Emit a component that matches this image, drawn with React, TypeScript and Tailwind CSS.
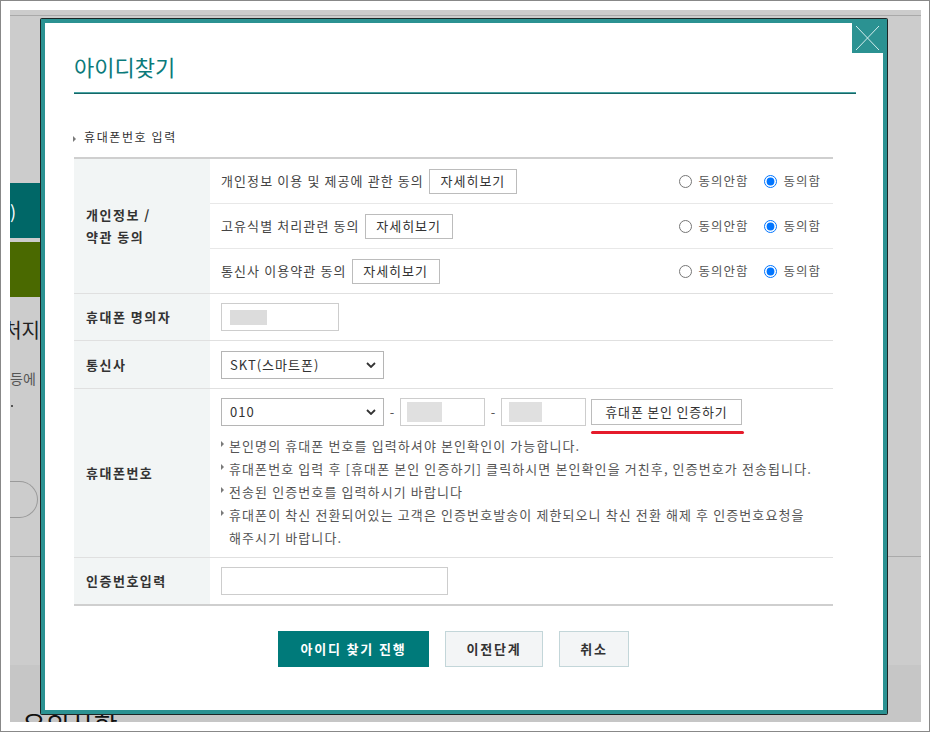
import React from "react";

function Tri() {
  return (
    <span className="inline-block h-0 w-0 shrink-0 border-y-[3px] border-l-[3px] border-y-transparent border-l-[#7a7a7a]" />
  );
}

function Chevron() {
  return (
    <svg width="10" height="6" viewBox="0 0 10 6" className="shrink-0">
      <path d="M1 1l4 4 4-4" fill="none" stroke="#333" strokeWidth="1.8" />
    </svg>
  );
}

function AgreeLine({ name, text, className }: { name: string; text: string; className: string }) {
  return (
    <div className={`flex items-center pl-[11px] pr-[12px] ${className}`}>
      <span className="whitespace-nowrap text-[13px] tracking-[1.1px] text-[#444]">{text}</span>
      <button className="ml-[5px] h-[25px] w-[88px] border border-[#bcbcbc] bg-white text-[13px] tracking-[1px] text-[#333]">
        자세히보기
      </button>
      <div className="ml-auto flex items-center whitespace-nowrap text-[12.5px] tracking-[1px] text-[#555]">
        <input type="radio" name={name} className="m-0 h-[13px] w-[13px]" />
        <span className="ml-[6px]">동의안함</span>
        <input type="radio" name={name} defaultChecked className="m-0 ml-[16px] h-[13px] w-[13px]" />
        <span className="ml-[6px]">동의함</span>
      </div>
    </div>
  );
}

function Label({ children }: { children: React.ReactNode }) {
  return (
    <div className="flex w-[136px] shrink-0 items-center bg-[#f2f5f5] pl-[12px] text-[13px] font-bold leading-[22px] tracking-[1.5px] text-[#333]">
      <div>{children}</div>
    </div>
  );
}

function Note({ children }: { children: React.ReactNode }) {
  return (
    <li className="flex items-start">
      <span className="mr-[5px] flex h-[19px] items-center">
        <Tri />
      </span>
      <span>{children}</span>
    </li>
  );
}

function Backdrop() {
  return (
    <>
      <div className="h-[6px] shrink-0 border-b border-[#a9a9a9]" />
      <div className="mt-[167px] flex w-[30px] shrink-0 flex-col">
        <div className="flex h-[55px] items-center bg-[#006767] text-[18px] leading-none text-white">)</div>
        <div className="mt-[4px] h-[55px] bg-[#4a6900]" />
        <div className="mt-[21px] flex h-[24px] justify-end overflow-hidden whitespace-nowrap text-[20px] leading-[24px] text-[#222]">
          처지
        </div>
        <div className="mt-[26px] h-[20px] overflow-hidden whitespace-nowrap text-[14px] leading-[20px] text-[#555]">
          등에
        </div>
        <div className="ml-px mt-[17px] h-[2px] w-[2px] bg-[#555]" />
        <div className="mt-[74px] h-[37px] w-[28px] rounded-r-full border border-l-0 border-[#9a9a9a]" />
      </div>
      <div className="mt-[38px] shrink-0 border-t border-[#aaa]" />
      <div className="mt-[108px] flex-1 bg-[#c6c6c6] pl-[12px] pt-[44px] text-[26px] leading-[30px] text-[#111]">
        유의사항
      </div>
    </>
  );
}

function Modal() {
  return (
    <div className="absolute left-[30px] top-[8px] h-[697px] w-[848px] rounded-[2px] bg-[#1c2626] p-px">
      <div className="relative h-full border-4 border-[#2b9292] bg-white">
        <button className="absolute right-0 top-0 h-[30px] w-[31px] bg-[#2b9292]">
          <svg width="31" height="30" viewBox="0 0 31 30">
            <path d="M4 3L27 27M27 3L4 27" stroke="#d5eeee" strokeWidth="1" />
          </svg>
        </button>

        <div className="pl-[29px] pr-[27px] pt-[28px]">
          <h1 className="h-[30px] text-[22px] leading-[30px] text-[#0b7a7a]">아이디찾기</h1>
          <div className="mt-[11px] h-[2px] border-t border-[#4aa3a3] bg-[#156767]" />

          <div className="mt-[34px] flex h-[18px] items-center text-[12px] tracking-[1.6px] text-[#333]">
            <span className="-ml-px">
              <Tri />
            </span>
            <span className="ml-[8px]">휴대폰번호 입력</span>
          </div>

          <div className="mt-[11px] w-[759px] border-t-2 border-[#cfcfcf]">
            <div className="flex border-b border-[#e0e0e0]">
              <Label>
                개인정보 /
                <br />
                약관 동의
              </Label>
              <div className="flex-1">
                <AgreeLine name="a1" text="개인정보 이용 및 제공에 관한 동의" className="h-[45px] border-b border-[#e8e8e8]" />
                <AgreeLine name="a2" text="고유식별 처리관련 동의" className="h-[45px] border-b border-[#e8e8e8]" />
                <AgreeLine name="a3" text="통신사 이용약관 동의" className="h-[44px]" />
              </div>
            </div>

            <div className="flex h-[47px] border-b border-[#e0e0e0]">
              <Label>휴대폰 명의자</Label>
              <div className="flex flex-1 items-center pl-[11px]">
                <div className="flex h-[28px] w-[118px] items-center border border-[#cdcdcd] pl-[8px]">
                  <div className="h-[15px] w-[37px] bg-[#dcdcdc]" />
                </div>
              </div>
            </div>

            <div className="flex h-[48px] border-b border-[#e0e0e0]">
              <Label>통신사</Label>
              <div className="flex flex-1 items-center pl-[11px]">
                <div className="flex h-[28px] w-[163px] items-center justify-between border border-[#b5b5b5] pl-[8px] pr-[7px] text-[13px] tracking-[1px] text-[#333]">
                  <span>SKT(스마트폰)</span>
                  <Chevron />
                </div>
              </div>
            </div>

            <div className="flex h-[169px] border-b border-[#e0e0e0]">
              <Label>휴대폰번호</Label>
              <div className="flex-1 pl-[11px] pt-[9px]">
                <div className="flex h-[28px] items-center">
                  <div className="flex h-[28px] w-[163px] items-center justify-between border border-[#b5b5b5] pl-[8px] pr-[7px] text-[13px] tracking-[1px] text-[#333]">
                    <span>010</span>
                    <Chevron />
                  </div>
                  <span className="w-[16px] text-center text-[13px] text-[#555]">-</span>
                  <div className="flex h-[28px] w-[85px] items-center border border-[#cdcdcd] pl-[6px]">
                    <div className="h-[20px] w-[35px] bg-[#e0e0e0]" />
                  </div>
                  <span className="w-[16px] text-center text-[13px] text-[#555]">-</span>
                  <div className="flex h-[28px] w-[85px] items-center border border-[#cdcdcd] pl-[7px]">
                    <div className="h-[20px] w-[33px] bg-[#e0e0e0]" />
                  </div>
                  <button className="ml-[5px] h-[26px] w-[151px] border border-[#bcbcbc] bg-white text-[13px] tracking-[0.8px] text-[#333]">
                    휴대폰 본인 인증하기
                  </button>
                </div>
                <div className="ml-[370px] mt-[5px] h-[3px] w-[153px] rounded-full bg-[#e51b2b]" />
                <ul className="whitespace-nowrap text-[13px] leading-[23px] tracking-[1.1px] text-[#555]">
                  <Note>본인명의 휴대폰 번호를 입력하셔야 본인확인이 가능합니다.</Note>
                  <Note>휴대폰번호 입력 후 [휴대폰 본인 인증하기] 클릭하시면 본인확인을 거친후, 인증번호가 전송됩니다.</Note>
                  <Note>전송된 인증번호를 입력하시기 바랍니다</Note>
                  <Note>
                    휴대폰이 착신 전환되어있는 고객은 인증번호발송이 제한되오니 착신 전환 해제 후 인증번호요청을
                    <br />
                    해주시기 바랍니다.
                  </Note>
                </ul>
              </div>
            </div>

            <div className="flex h-[48px] border-b-2 border-[#cfcfcf]">
              <Label>인증번호입력</Label>
              <div className="flex flex-1 items-center pl-[11px]">
                <div className="h-[28px] w-[227px] border border-[#cdcdcd]" />
              </div>
            </div>
          </div>

          <div className="mt-[25px] flex w-[759px] justify-center gap-[16px] text-[13px] font-bold tracking-[1.8px]">
            <button className="h-[36px] w-[151px] bg-[#007a7a] text-white">아이디 찾기 진행</button>
            <button className="h-[36px] w-[98px] border border-[#c3d6d9] bg-[#f3f5f6] text-[#333]">이전단계</button>
            <button className="h-[36px] w-[70px] border border-[#c3d6d9] bg-[#f3f5f6] text-[#333]">취소</button>
          </div>
        </div>
      </div>
    </div>
  );
}

export default function App() {
  return (
    <div className="h-[732px] w-[930px] border border-[#888] bg-white pb-[9px] pl-[9px] pr-[8px] pt-[9px] font-['Noto_Sans_CJK_KR','Noto_Sans',sans-serif]">
      <div className="relative flex h-full flex-col overflow-hidden bg-[#cccccc]">
        <Backdrop />
        <Modal />
      </div>
    </div>
  );
}
